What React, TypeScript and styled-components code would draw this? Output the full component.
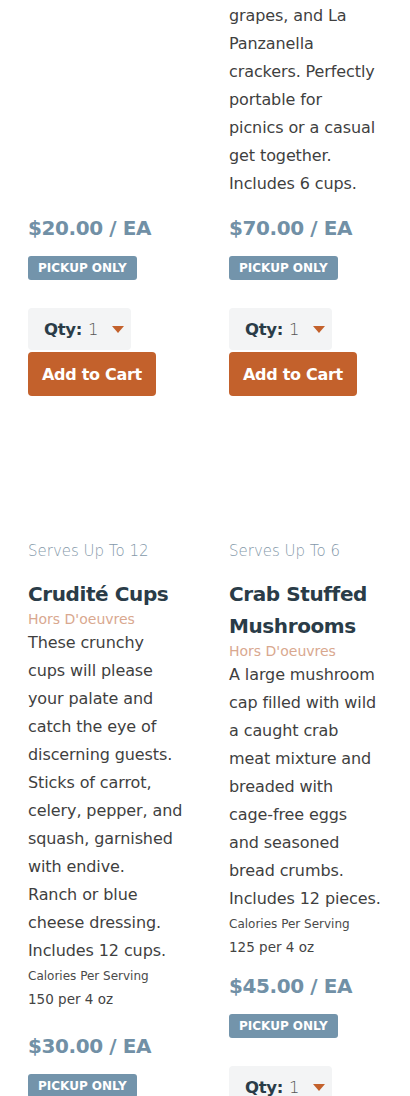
import React from "react";
import styled, { createGlobalStyle } from "styled-components";

const Global = createGlobalStyle`
  html, body { margin: 0; padding: 0; background: #ffffff; }
  body {
    font-family: "DejaVu Sans", Verdana, sans-serif;
    -webkit-font-smoothing: antialiased;
  }
`;

const Grid = styled.main`
  display: grid;
  grid-template-columns: 165px 165px;
  column-gap: 36px;
  row-gap: 143px;
  padding: 2px 0 0 28px;
  align-items: start;
`;

const Card = styled.article`
  display: flex;
  flex-direction: column;
  align-items: flex-start;
`;

const Serves = styled.div`
  font-size: 15px;
  line-height: 24px;
  font-weight: 300;
  color: #8498a9;
  margin-bottom: 15px;
`;

const Title = styled.h3`
  margin: 0;
  font-size: 20px;
  line-height: 32px;
  font-weight: 700;
  letter-spacing: -0.4px;
  color: #2a3c48;
`;

const Category = styled.div`
  font-size: 14px;
  line-height: 19px;
  color: #d9a88f;
`;

const Desc = styled.p`
  margin: 0;
  font-size: 16px;
  line-height: 28px;
  letter-spacing: -0.1px;
  color: #3f3f3f;
  white-space: nowrap;
`;

const CalLabel = styled.div`
  font-size: 12px;
  line-height: 22px;
  color: #4a4a4a;
`;

const CalValue = styled.div`
  font-size: 13.5px;
  line-height: 24px;
  color: #444444;
`;

const Footer = styled.div<{ $gap: number }>`
  display: flex;
  flex-direction: column;
  align-items: flex-start;
  margin-top: ${(p) => p.$gap}px;
`;

const Price = styled.div`
  font-size: 20px;
  line-height: 24px;
  font-weight: 700;
  letter-spacing: -0.4px;
  color: #7190a6;
`;

const Badge = styled.span`
  margin-top: 16px;
  height: 24px;
  padding: 0 10px;
  display: inline-flex;
  align-items: center;
  border-radius: 3px;
  background: #7394ab;
  color: #ffffff;
  font-size: 12px;
  font-weight: 700;
  text-transform: uppercase;
`;

const QtyBox = styled.div`
  margin-top: 28px;
  width: 103px;
  height: 42px;
  box-sizing: border-box;
  padding: 0 7px 0 16px;
  display: flex;
  align-items: center;
  border-radius: 4px;
  background: #f3f4f5;
`;

const QtyLabel = styled.span`
  font-size: 16.5px;
  font-weight: 700;
  letter-spacing: -0.3px;
  color: #2a3c48;
`;

const QtyValue = styled.span`
  margin-left: 6px;
  font-size: 16.5px;
  font-weight: 300;
  color: #555555;
`;

const Caret = styled.svg`
  margin-left: auto;
  display: block;
`;

const CartButton = styled.button`
  margin-top: 2px;
  height: 44px;
  padding: 0 14px;
  border: none;
  border-radius: 4px;
  background: #c3612c;
  color: #ffffff;
  font-family: inherit;
  font-size: 16px;
  font-weight: 700;
  letter-spacing: -0.3px;
  cursor: pointer;
`;

type Product = {
  serves?: string;
  title?: string[];
  category?: string;
  desc?: string[];
  calories?: string;
  price: string;
  priceGap: number;
};

const products: Product[] = [
  { price: "$20.00 / EA", priceGap: 214 },
  {
    desc: [
      "grapes, and La",
      "Panzanella",
      "crackers. Perfectly",
      "portable for",
      "picnics or a casual",
      "get together.",
      "Includes 6 cups.",
    ],
    price: "$70.00 / EA",
    priceGap: 18,
  },
  {
    serves: "Serves Up To 12",
    title: ["Crudité Cups"],
    category: "Hors D'oeuvres",
    desc: [
      "These crunchy",
      "cups will please",
      "your palate and",
      "catch the eye of",
      "discerning guests.",
      "Sticks of carrot,",
      "celery, pepper, and",
      "squash, garnished",
      "with endive.",
      "Ranch or blue",
      "cheese dressing.",
      "Includes 12 cups.",
    ],
    calories: "150 per 4 oz",
    price: "$30.00 / EA",
    priceGap: 23,
  },
  {
    serves: "Serves Up To 6",
    title: ["Crab Stuffed", "Mushrooms"],
    category: "Hors D'oeuvres",
    desc: [
      "A large mushroom",
      "cap filled with wild",
      "a caught crab",
      "meat mixture and",
      "breaded with",
      "cage-free eggs",
      "and seasoned",
      "bread crumbs.",
      "Includes 12 pieces.",
    ],
    calories: "125 per 4 oz",
    price: "$45.00 / EA",
    priceGap: 15,
  },
];

const Lines: React.FC<{ lines: string[] }> = ({ lines }) => (
  <>
    {lines.map((l, i) => (
      <React.Fragment key={i}>
        {i > 0 && <br />}
        {l}
      </React.Fragment>
    ))}
  </>
);

const ProductCard: React.FC<{ p: Product }> = ({ p }) => (
  <Card>
    {p.serves && <Serves>{p.serves}</Serves>}
    {p.title && (
      <Title>
        <Lines lines={p.title} />
      </Title>
    )}
    {p.category && <Category>{p.category}</Category>}
    {p.desc && (
      <Desc>
        <Lines lines={p.desc} />
      </Desc>
    )}
    {p.calories && (
      <>
        <CalLabel>Calories Per Serving</CalLabel>
        <CalValue>{p.calories}</CalValue>
      </>
    )}
    <Footer $gap={p.priceGap}>
      <Price>{p.price}</Price>
      <Badge>Pickup Only</Badge>
      <QtyBox>
        <QtyLabel>Qty:</QtyLabel>
        <QtyValue>1</QtyValue>
        <Caret width="12" height="7" viewBox="0 0 12 7">
          <path d="M0 0 H12 L6 7 Z" fill="#c3612c" />
        </Caret>
      </QtyBox>
      <CartButton type="button">Add to Cart</CartButton>
    </Footer>
  </Card>
);

export default function App() {
  return (
    <>
      <Global />
      <Grid>
        {products.map((p, i) => (
          <ProductCard key={i} p={p} />
        ))}
      </Grid>
    </>
  );
}
